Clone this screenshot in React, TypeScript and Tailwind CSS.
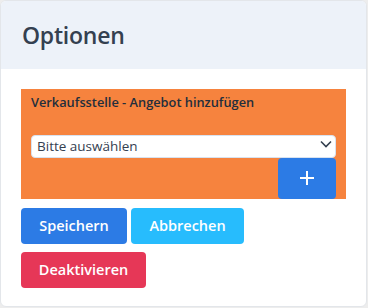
export default function App() {
  return (
    <div className="h-[308px] w-[368px] bg-[#ededed] font-['Open_Sans',sans-serif] text-[#344050]">
      <div className="h-[307px] w-[367px] overflow-hidden rounded-[6px] border border-[#e3e6ea] bg-white">
        <div className="flex h-[68px] items-center bg-[#edf2f9] px-[21px]">
          <div className="text-[23px] font-semibold tracking-[-0.01em] text-[#344050]">Optionen</div>
        </div>
        <div className="px-[20px] pt-[20px]">
          <div className="flex flex-col bg-[#f6833e] px-[10px] pt-[4px]">
            <div className="text-[12.8px] font-semibold text-[#232e3c]">Verkaufsstelle - Angebot hinzufügen</div>
            <div className="relative mt-[21px]">
              <select className="h-[23px] w-full appearance-none rounded-[4px] border border-[#d8e2ef] bg-white pl-[5px] text-[13.5px] text-[#344050] outline-none">
                <option>Bitte auswählen</option>
              </select>
              <svg className="pointer-events-none absolute right-[4px] top-[7px]" width="12" height="8" viewBox="0 0 12 8">
                <path d="M1 1.5l5 5 5-5" fill="none" stroke="#344050" strokeWidth="1.6" />
              </svg>
            </div>
            <div className="flex justify-end">
              <button className="flex h-[41px] w-[58px] items-center justify-center rounded-[4px] bg-[#2c7be5] text-white">
                <svg width="14" height="14" viewBox="0 0 14 14">
                  <path d="M7 0v14M0 7h14" stroke="white" strokeWidth="2" />
                </svg>
              </button>
            </div>
          </div>
          <div className="mt-[9px] flex gap-[4px]">
            <button className="h-[36px] w-[106px] rounded-[4px] bg-[#2c7be5] text-[14.5px] font-semibold text-white">Speichern</button>
            <button className="h-[36px] w-[113px] rounded-[4px] bg-[#27bcfd] text-[14.5px] font-semibold text-white">Abbrechen</button>
          </div>
          <div className="mt-[8px]">
            <button className="h-[36px] w-[125px] rounded-[4px] bg-[#e63757] text-[14.5px] font-semibold text-white">Deaktivieren</button>
          </div>
        </div>
      </div>
    </div>
  );
}
